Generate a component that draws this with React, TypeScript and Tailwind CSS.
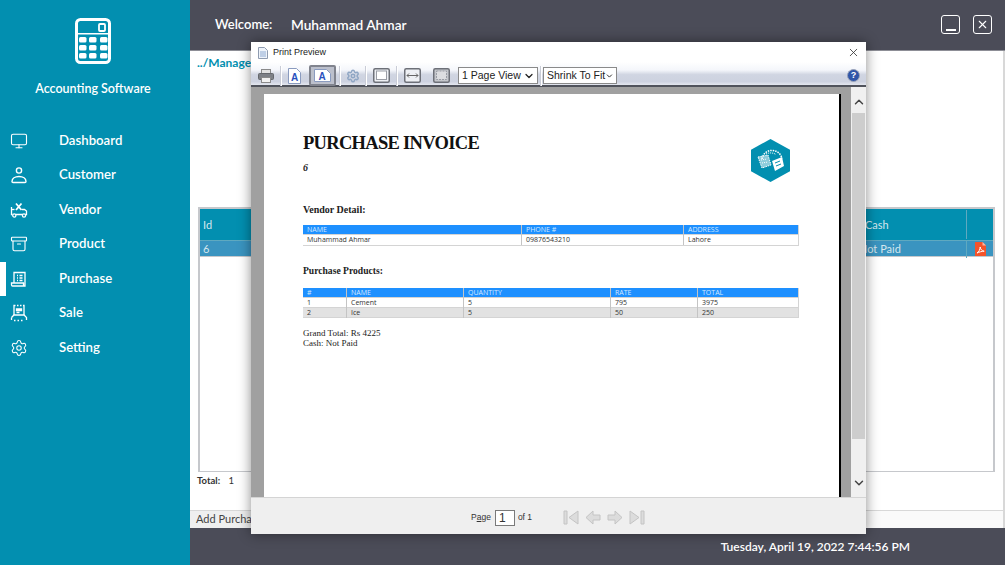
import React from 'react';
import { Archive, ChevronDown, ChevronUp, Monitor, Settings, X } from 'lucide-react';

const uiFont = { fontFamily: 'Lato, "Open Sans", sans-serif' };

const CalculatorIcon = () => (
  <svg width="36" height="46" viewBox="0 0 36 46" fill="none">
    <rect x="1.500" y="1.500" width="33" height="43" rx="4" stroke="white" strokeWidth="3" />
    <rect x="3" y="15" width="30" height="1.500" fill="white" />
    <rect x="24" y="6" width="6" height="7" rx="1" stroke="white" strokeWidth="1.800" />
    {[19, 27, 35].map((y) =>
      [4, 14, 25].map((x) => <rect key={`${x}-${y}`} x={x} y={y} width="7.500" height="5.500" rx="1.500" fill="white" />)
    )}
  </svg>
);

const CustomerIcon = () => (
  <svg width="18" height="18" viewBox="0 0 18 18" fill="none" stroke="white" strokeWidth="1.400">
    <circle cx="9" cy="4.500" r="2.600" />
    <path d="M2 15.500c0-3 3-5 7-5s7 2 7 5c0 .8-.5 1-1 1H3c-.5 0-1-.2-1-1z" />
  </svg>
);

const VendorIcon = () => (
  <svg width="18" height="18" viewBox="0 0 18 18" fill="none" stroke="white" strokeWidth="1.300">
    <path d="M1.500 6v7.500h1M6 13.500h6.500M15.500 13.500h1V10l-2-1.500h-2.500" />
    <path d="M6 2.500l5.500 6.500M11.500 2.500L6 9" strokeWidth="1.800" />
    <path d="M1.500 8.500h3" />
    <circle cx="4.300" cy="14.500" r="1.600" />
    <circle cx="14" cy="14.500" r="1.600" />
  </svg>
);

const PurchaseIcon = () => (
  <svg width="18" height="18" viewBox="0 0 18 18" fill="none" stroke="white" strokeWidth="1.300">
    <path d="M4 13V2.500h11V13" />
    <path d="M1.500 13h12v3h-11c-.7 0-1-.5-1-1.200zM15 13v3h-1.500" />
    <path d="M7 5.500h1M7 8h1M7 10.500h1M9.500 5.500h3M9.500 8h3M9.500 10.500h3" />
  </svg>
);

const SaleIcon = () => (
  <svg width="18" height="18" viewBox="0 0 18 18" fill="none" stroke="white" strokeWidth="1.300">
    <path d="M4 11V1.500h1.500M7 1.500h1.500M10 1.500h1.500M13 1.500h1V11" />
    <path d="M6.500 5h5v1.500h-5zM6.500 8.500h3" />
    <path d="M1.500 13.500l2.500-2.500h10l2.500 2.500V16" />
    <path d="M1.500 13.500V16M4 16.500h1.500M7.500 16.500H9M11 16.500h1.500" />
  </svg>
);

const navItems = [
  { label: 'Dashboard', icon: <Monitor size={18} color="white" strokeWidth={1.5} /> },
  { label: 'Customer', icon: <CustomerIcon /> },
  { label: 'Vendor', icon: <VendorIcon /> },
  { label: 'Product', icon: <Archive size={18} color="white" strokeWidth={1.5} /> },
  { label: 'Purchase', icon: <PurchaseIcon />, active: true },
  { label: 'Sale', icon: <SaleIcon /> },
  { label: 'Setting', icon: <Settings size={18} color="white" strokeWidth={1.4} /> },
];

const Sidebar = () => (
  <aside className="w-[190px] shrink-0 bg-[#028fb0] text-white flex flex-col" style={uiFont}>
    <div className="h-[123.500px] flex flex-col items-center pt-[18px] pr-[4px]">
      <CalculatorIcon />
      <div className="mt-[15px] text-[12.500px] font-semibold leading-[20px]">Accounting Software</div>
    </div>
    <nav className="flex flex-col">
      {navItems.map((item) => (
        <div key={item.label} className="relative h-[34.500px] flex items-center pl-[10px]">
          {item.active && <span className="absolute left-0 top-0 bottom-0 w-[6px] bg-white" />}
          <span className="w-[49px] flex">{item.icon}</span>
          <span className="text-[13.200px] font-semibold">{item.label}</span>
        </div>
      ))}
    </nav>
  </aside>
);

const TopBar = () => (
  <header className="h-[51px] shrink-0 bg-[#4b4c58] border-b border-[#8d8e96] flex items-center pl-[25px] pr-[13px] text-white text-[13.700px] font-semibold" style={uiFont}>
    <span className="w-[76px] text-[13px]">Welcome:</span>
    <span>Muhammad Ahmar</span>
    <div className="ml-auto mb-[2px] flex gap-[13px]">
      <div className="w-[19px] h-[19px] border-[1.500px] border-white rounded-[3px] flex items-end justify-center pb-[2px]">
        <span className="w-[10px] h-[1.500px] bg-white" />
      </div>
      <div className="w-[19px] h-[19px] border-[1.500px] border-white rounded-[3px] flex items-center justify-center">
        <X size={13} color="white" strokeWidth={2} />
      </div>
    </div>
  </header>
);

const PdfIcon = () => (
  <svg width="11" height="14" viewBox="0 0 11 14">
    <path d="M0 0h7.500L11 3.500V14H0z" fill="#f4532a" />
    <path d="M7.500 0L11 3.500H7.500z" fill="#fbb9a5" />
    <path d="M2 11c2-1 3-3.500 3.200-6C5.500 7.500 7 9 9.200 9.200 7 9.300 4 10 2 11z" fill="none" stroke="white" strokeWidth="1" />
  </svg>
);

const PurchaseGrid = () => (
  <div className="flex-1 mx-[8px] border-2 border-[#c6c8cc] border-b flex flex-col text-[11px] text-[#d5e7ee]" style={uiFont}>
    <div className="h-[32px] pt-[2px] bg-[#028fb0] grid grid-cols-[1fr_104px_27px] items-center border-b border-[#5fa9c0]">
      <span className="pl-[3px]">Id</span>
      <span className="pl-[3px]">Cash</span>
      <span className="h-full -mt-[2px] border-l border-[#5fa9c0]" />
    </div>
    <div className="h-[16px] bg-[#3a94c0] grid grid-cols-[1fr_104px_27px] items-center border-b border-[#c6c8cc]">
      <span className="pl-[3px]">6</span>
      <span className="-ml-[3px]">Not Paid</span>
      <span className="h-full border-l border-[#5fa9c0] flex items-center justify-center"><PdfIcon /></span>
    </div>
  </div>
);

const MainContent = () => (
  <main className="flex-1 min-h-0 bg-white flex flex-col border-r-2 border-[#d8d8d8]">
    <div className="h-[156px] shrink-0 pl-[7px] pt-[4px] text-[12px] leading-[16px] font-bold text-[#028fb0]" style={uiFont}>../Manage Purchase</div>
    <PurchaseGrid />
    <div className="h-[38px] shrink-0 pl-[7px] pt-[2px] text-[9.500px] leading-[14px] font-bold text-[#333]" style={uiFont}>
      Total: <span className="ml-[6px] font-normal">1</span>
    </div>
    <div className="h-[18px] shrink-0 border-t border-[#d8d8d8] bg-[#fafafa]">
      <div className="w-[100px] h-full bg-[#efefef] pl-[6px] text-[11px] leading-[15px] text-[#444]" style={uiFont}>Add Purchase</div>
    </div>
  </main>
);

const Sep = () => <span className="w-[2px] h-[20px] bg-[#c9ccd6] border-r border-white" />;

const PrinterGlyph = () => (
  <svg width="16" height="14" viewBox="0 0 16 14">
    <rect x="3.500" y="0.500" width="9" height="4" fill="#e2e2e2" stroke="#8a8a8a" />
    <rect x="0.500" y="4.500" width="15" height="6" rx="1" fill="#7d8086" stroke="#65686d" />
    <rect x="3.500" y="8.500" width="9" height="5" fill="#f2f2f2" stroke="#8a8a8a" />
  </svg>
);

const PageA = ({ wide }: { wide?: boolean }) => (
  <svg width={wide ? 17 : 13} height={wide ? 13 : 16} viewBox={wide ? '0 0 17 13' : '0 0 13 16'}>
    <path d={wide ? 'M.5.500h12l4 4v8H.5z' : 'M.5.500h8l4 4v11H.5z'} fill="white" stroke="#8a9bbf" />
    <text x={wide ? 8 : 6.500} y={wide ? 10.500 : 13} textAnchor="middle" fontSize="10" fontWeight="700" fontFamily="Liberation Sans, sans-serif" fill="#2a52be">A</text>
  </svg>
);

const BoxGlyph = ({ mode }: { mode: 'full' | 'width' | 'page' }) => (
  <svg width="17" height="15" viewBox="0 0 17 15">
    <rect x="0.750" y="0.750" width="15.500" height="13.500" rx="1.500" fill={mode === 'page' ? '#c5c7cc' : '#eef0f4'} stroke="#6d7078" strokeWidth="1.500" />
    {mode === 'full' && <rect x="3.500" y="3" width="10" height="8.500" fill="white" stroke="#9a9da5" />}
    {mode === 'width' && <path d="M3 7.500h11M3 7.500l2-2M3 7.500l2 2M14 7.500l-2-2M14 7.500l-2 2" stroke="#666" fill="none" />}
    {mode === 'page' && <rect x="3.500" y="3" width="10" height="8.500" fill="#dcdde0" stroke="#9a9da5" strokeDasharray="2 1" />}
  </svg>
);

const ToolSelect = ({ label, width }: { label: string; width: string }) => (
  <div className={`${width} h-[17px] bg-white border border-[#8a8a8a] flex items-center justify-between pl-[3px] pr-[2px] text-[10.500px] text-[#222] whitespace-nowrap`}>
    <span>{label}</span>
    <ChevronDown size={12} strokeWidth={2.500} color="#222" />
  </div>
);

const Toolbar = () => (
  <div className="h-[25px] shrink-0 pt-[4px] bg-[linear-gradient(to_bottom,#ffffff_0%,#f4f6fb_35%,#d0d5e2_55%,#cdd2e0_85%,#e4e7ef_100%)] flex items-center pl-[7px] pr-[6px] border-b-2 border-[#50535c]" style={{ fontFamily: '"Liberation Sans", sans-serif' }}>
    <PrinterGlyph />
    <span className="w-[6px]" /><Sep /><span className="w-[6px]" />
    <PageA />
    <span className="w-[8px]" />
    <div className="h-[21px] flex items-center justify-center px-[3px] bg-[#bcc0cc] border-2 border-[#80838d] rounded-[2px]"><PageA wide /></div>
    <span className="w-[3px]" /><Sep /><span className="w-[5px]" />
    <Settings size={14} color="#8fa6c4" strokeWidth={2.500} />
    <span className="w-[5px]" /><Sep /><span className="w-[6px]" />
    <BoxGlyph mode="full" />
    <span className="w-[6px]" /><Sep /><span className="w-[6px]" />
    <BoxGlyph mode="width" />
    <span className="w-[12px]" />
    <BoxGlyph mode="page" />
    <span className="w-[8px]" />
    <ToolSelect label="1 Page View" width="w-[80px]" />
    <span className="w-[2px]" /><Sep /><span className="w-[1px]" />
    <ToolSelect label="Shrink To Fit" width="w-[74px]" />
    <span className="ml-auto w-[13px] h-[13px] rounded-full bg-[#2f55a8] border border-[#9aa3b8] text-white text-[9px] font-bold leading-[11px] text-center">?</span>
  </div>
);

const vendorCols = 'grid-cols-[218px_162px_1fr]';
const productCols = 'grid-cols-[43px_117px_147px_87px_1fr]';

const TableRow = ({ cells, cols, head, alt }: { cells: string[]; cols: string; head?: boolean; alt?: boolean }) => (
  <div className={`grid ${cols} h-[10.300px] text-[7px] leading-[10px] ${head ? 'bg-[#1e90ff] text-[#d5e9ff]' : alt ? 'bg-[#e2e2e2] text-[#333]' : 'bg-white text-[#333]'} border-b border-[#d4d4d4]`}>
    {cells.map((c, i) => (
      <span key={i} className={`pl-[4px] ${i > 0 ? 'border-l border-[#c4c4c4]' : ''}`}>{c}</span>
    ))}
  </div>
);

const LogoMark = () => (
  <svg width="30" height="30" viewBox="0 0 30 30" fill="none" stroke="white">
    <path d="M6 13C7 7 12 4 17 4.500s8 4 9 8" strokeDasharray="1.500 1" strokeWidth="1.500" />
    <path d="M10 8c3-1.500 7-1.500 10 .5" strokeDasharray="1 1" />
    <path d="M2 11l10-2 3 10-9 3z" fill="white" fillOpacity="0.550" strokeDasharray="1.500 1" />
    <path d="M16 15l10-4 2 9-9 5z" fill="white" stroke="none" />
    <path d="M19 17l5-2M20 20l5-2" stroke="#028fb0" />
    <path d="M5 14l6-1M6 17l6-1" stroke="white" strokeDasharray="1 1" />
  </svg>
);

const InvoicePage = () => (
  <div className="w-[577px] h-full bg-white border-r-2 border-black pl-[39px] pr-[40px] relative" style={{ fontFamily: '"Liberation Serif", serif' }}>
    <div className="pt-[38px] text-[18.500px] leading-[22px] font-bold tracking-[-0.7px] text-[#111]">PURCHASE INVOICE</div>
    <div className="mt-[8px] text-[10px] leading-[12px] font-bold italic text-[#222]">6</div>
    <div className="mt-[30px] text-[10px] leading-[12px] font-bold text-[#222]">Vendor Detail:</div>
    <div className="mt-[9px] border-r border-[#d4d4d4]" style={{ fontFamily: '"Open Sans", sans-serif' }}>
      <TableRow head cols={vendorCols} cells={['NAME', 'PHONE #', 'ADDRESS']} />
      <TableRow cols={vendorCols} cells={['Muhammad Ahmar', '09876543210', 'Lahore']} />
    </div>
    <div className="mt-[19px] text-[9.600px] leading-[12px] font-bold text-[#222]">Purchase Products:</div>
    <div className="mt-[11px] border-r border-[#d4d4d4]" style={{ fontFamily: '"Open Sans", sans-serif' }}>
      <TableRow head cols={productCols} cells={['#', 'NAME', 'QUANTITY', 'RATE', 'TOTAL']} />
      <TableRow cols={productCols} cells={['1', 'Cement', '5', '795', '3975']} />
      <TableRow alt cols={productCols} cells={['2', 'Ice', '5', '50', '250']} />
    </div>
    <div className="mt-[10px] text-[9px] leading-[10px] text-[#222]">
      <div>Grand Total: Rs 4225</div>
      <div>Cash: Not Paid</div>
    </div>
    {/* logo sits on the page like a picture in the printed report */}
    <div className="absolute left-[487px] top-[45px] w-[39px] h-[43px] bg-[#028fb0] [clip-path:polygon(50%_0,100%_25%,100%_75%,50%_100%,0_75%,0_25%)] flex items-center justify-center">
      <LogoMark />
    </div>
  </div>
);

const PreviewScrollbar = () => (
  <div className="absolute right-0 top-0 bottom-0 w-[15px] bg-[#f0f0f0] flex flex-col items-center">
    <div className="h-[26px] pt-[4px] flex items-center justify-center"><ChevronUp size={14} strokeWidth={2.500} color="#444" /></div>
    <div className="w-full h-[326px] px-[1px]"><div className="w-full h-full bg-[#cdcdcd]" /></div>
    <div className="mt-auto h-[30px] pt-[2px] flex items-center justify-center"><ChevronDown size={14} strokeWidth={2.500} color="#444" /></div>
  </div>
);

const NavGlyph = ({ d }: { d: string }) => (
  <svg width="16" height="15" viewBox="0 0 16 15">
    <path d={d} fill="#dcdcdc" stroke="#c4c4c4" />
  </svg>
);

const PreviewFooter = () => (
  <div className="flex-1 bg-[#efefef] border-t border-[#d4d4d4] flex items-center pl-[220px] pt-[3px] text-[8.500px] text-[#333]" style={{ fontFamily: '"Liberation Sans", sans-serif' }}>
    <span>P<span className="underline">a</span>ge</span>
    <span className="ml-[4px] w-[20px] h-[16px] bg-white border border-[#7a7a7a] text-[12px] leading-[14px] pl-[3px]">1</span>
    <span className="ml-[3px]">of 1</span>
    <div className="ml-[31px] flex gap-[6px]">
      <NavGlyph d="M1 1h3v13H1zM15 1v13L6 7.500z" />
      <NavGlyph d="M1 7.500L8 1v4h7v5H8v4z" />
      <NavGlyph d="M15 7.500L8 1v4H1v5h7v4z" />
      <NavGlyph d="M15 1h-3v13h3zM1 1v13l9-6.500z" />
    </div>
  </div>
);

const PrintPreview = () => (
  <div className="absolute left-[251px] top-[42px] w-[615px] h-[492px] bg-white flex flex-col shadow-[0_0_12px_rgba(0,0,0,0.45)]">
    <div className="h-[20px] shrink-0 flex items-center pl-[7px] pr-[6px] pt-[1px] text-[9px] text-[#222]" style={{ fontFamily: '"Liberation Sans", sans-serif' }}>
      <svg width="10" height="12" viewBox="0 0 10 12" className="mr-[5px]">
        <path d="M.5.500h6l3 3v8h-9z" fill="#eef3fa" stroke="#8e9bb0" />
        <path d="M2 5h6M2 7h6M2 9h6" stroke="#8eaad2" />
      </svg>
      <span>Print Preview</span>
      <X size={13} className="ml-auto" color="#333" strokeWidth={1.500} />
    </div>
    <Toolbar />
    <div className="relative h-[410px] shrink-0 bg-[#a0a0a0] pl-[13px] pt-[7px] overflow-hidden">
      <InvoicePage />
      <PreviewScrollbar />
    </div>
    <PreviewFooter />
  </div>
);

const App: React.FC = () => (
  <div className="relative w-full h-screen overflow-hidden flex">
    <Sidebar />
    <div className="flex-1 min-w-0 flex flex-col">
      <TopBar />
      <MainContent />
      <footer className="h-[37px] shrink-0 bg-[#4b4c58] flex items-center justify-end pr-[95px] text-white text-[12px] font-semibold" style={uiFont}>
        Tuesday, April 19, 2022 7:44:56 PM
      </footer>
    </div>
    <PrintPreview />
  </div>
);

export default App;
